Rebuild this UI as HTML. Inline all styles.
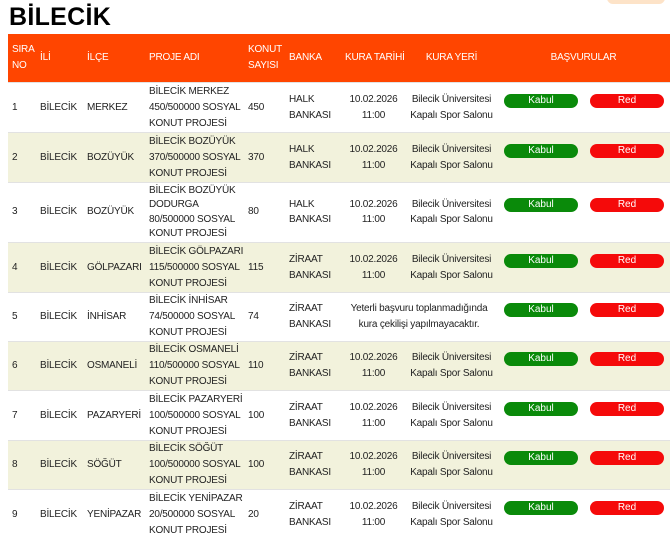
<!DOCTYPE html>
<html><head><meta charset="utf-8"><style>
body{margin:0;width:670px;height:533px;overflow:hidden;background:#fff;font-family:"Liberation Sans","DejaVu Sans",sans-serif;}
h1{position:absolute;left:9px;top:3px;margin:0;font-size:25px;font-weight:bold;color:#000;letter-spacing:0.3px}
.pill{position:absolute;left:607px;top:-8px;width:58px;height:12px;border-radius:6px;background:#fde3c8}
table{position:absolute;left:8px;top:34px;border-collapse:collapse;table-layout:fixed;width:662px;font-size:10px;color:#222;letter-spacing:-0.2px}
th{background:#ff4500;color:#fff;font-weight:normal;text-align:left;height:48px;padding:0 4px;line-height:16px;white-space:nowrap;overflow:hidden}
td{padding:0 4px;line-height:16px;border-top:1px solid #e2e2e2;vertical-align:middle;white-space:nowrap;overflow:visible}
tr.t td{line-height:14.5px}
tr.e td{background:#f2f2dc}
.c{text-align:center}
.b{display:inline-block;width:74px;height:14px;line-height:14px;border-radius:7px;color:#fff;text-align:center;position:relative;top:-7px;letter-spacing:0}
.k{background:#0a8a0a;margin-left:3px}.r{background:#f50a0a;margin-left:12px}
</style></head><body>
<h1>BİLECİK</h1><div class="pill"></div>
<table>
<colgroup><col style="width:28px"><col style="width:47px"><col style="width:62px"><col style="width:99px"><col style="width:41px"><col style="width:56px"><col style="width:65px"><col style="width:91px"><col></colgroup>
<tr><th>SIRA<br>NO</th><th>İLİ</th><th>İLÇE</th><th>PROJE ADI</th><th>KONUT<br>SAYISI</th><th>BANKA</th><th class="c">KURA TARİHİ</th><th class="c">KURA YERİ</th><th class="c">BAŞVURULAR</th></tr>
<tr style="height:50px"><td>1</td><td>BİLECİK</td><td>MERKEZ</td><td>BİLECİK MERKEZ<br>450/500000 SOSYAL<br>KONUT PROJESİ</td><td>450</td><td>HALK<br>BANKASI</td><td class="c">10.02.2026<br>11:00</td><td class="c">Bilecik Üniversitesi<br>Kapalı Spor Salonu</td><td><span class="b k">Kabul</span><span class="b r">Red</span></td></tr>
<tr class="e" style="height:50px"><td>2</td><td>BİLECİK</td><td>BOZÜYÜK</td><td>BİLECİK BOZÜYÜK<br>370/500000 SOSYAL<br>KONUT PROJESİ</td><td>370</td><td>HALK<br>BANKASI</td><td class="c">10.02.2026<br>11:00</td><td class="c">Bilecik Üniversitesi<br>Kapalı Spor Salonu</td><td><span class="b k">Kabul</span><span class="b r">Red</span></td></tr>
<tr class="t" style="height:60px"><td>3</td><td>BİLECİK</td><td>BOZÜYÜK</td><td>BİLECİK BOZÜYÜK<br>DODURGA<br>80/500000 SOSYAL<br>KONUT PROJESİ</td><td>80</td><td>HALK<br>BANKASI</td><td class="c">10.02.2026<br>11:00</td><td class="c">Bilecik Üniversitesi<br>Kapalı Spor Salonu</td><td><span class="b k">Kabul</span><span class="b r">Red</span></td></tr>
<tr class="e" style="height:50px"><td>4</td><td>BİLECİK</td><td>GÖLPAZARI</td><td>BİLECİK GÖLPAZARI<br>115/500000 SOSYAL<br>KONUT PROJESİ</td><td>115</td><td>ZİRAAT<br>BANKASI</td><td class="c">10.02.2026<br>11:00</td><td class="c">Bilecik Üniversitesi<br>Kapalı Spor Salonu</td><td><span class="b k">Kabul</span><span class="b r">Red</span></td></tr>
<tr style="height:49px"><td>5</td><td>BİLECİK</td><td>İNHİSAR</td><td>BİLECİK İNHİSAR<br>74/500000 SOSYAL<br>KONUT PROJESİ</td><td>74</td><td>ZİRAAT<br>BANKASI</td><td class="c" colspan="2">Yeterli başvuru toplanmadığında<br>kura çekilişi yapılmayacaktır.</td><td><span class="b k">Kabul</span><span class="b r">Red</span></td></tr>
<tr class="e" style="height:49px"><td>6</td><td>BİLECİK</td><td>OSMANELİ</td><td>BİLECİK OSMANELİ<br>110/500000 SOSYAL<br>KONUT PROJESİ</td><td>110</td><td>ZİRAAT<br>BANKASI</td><td class="c">10.02.2026<br>11:00</td><td class="c">Bilecik Üniversitesi<br>Kapalı Spor Salonu</td><td><span class="b k">Kabul</span><span class="b r">Red</span></td></tr>
<tr style="height:50px"><td>7</td><td>BİLECİK</td><td>PAZARYERİ</td><td>BİLECİK PAZARYERİ<br>100/500000 SOSYAL<br>KONUT PROJESİ</td><td>100</td><td>ZİRAAT<br>BANKASI</td><td class="c">10.02.2026<br>11:00</td><td class="c">Bilecik Üniversitesi<br>Kapalı Spor Salonu</td><td><span class="b k">Kabul</span><span class="b r">Red</span></td></tr>
<tr class="e" style="height:49px"><td>8</td><td>BİLECİK</td><td>SÖĞÜT</td><td>BİLECİK SÖĞÜT<br>100/500000 SOSYAL<br>KONUT PROJESİ</td><td>100</td><td>ZİRAAT<br>BANKASI</td><td class="c">10.02.2026<br>11:00</td><td class="c">Bilecik Üniversitesi<br>Kapalı Spor Salonu</td><td><span class="b k">Kabul</span><span class="b r">Red</span></td></tr>
<tr style="height:50px"><td>9</td><td>BİLECİK</td><td>YENİPAZAR</td><td>BİLECİK YENİPAZAR<br>20/500000 SOSYAL<br>KONUT PROJESİ</td><td>20</td><td>ZİRAAT<br>BANKASI</td><td class="c">10.02.2026<br>11:00</td><td class="c">Bilecik Üniversitesi<br>Kapalı Spor Salonu</td><td><span class="b k">Kabul</span><span class="b r">Red</span></td></tr>
</table>
</body></html>
